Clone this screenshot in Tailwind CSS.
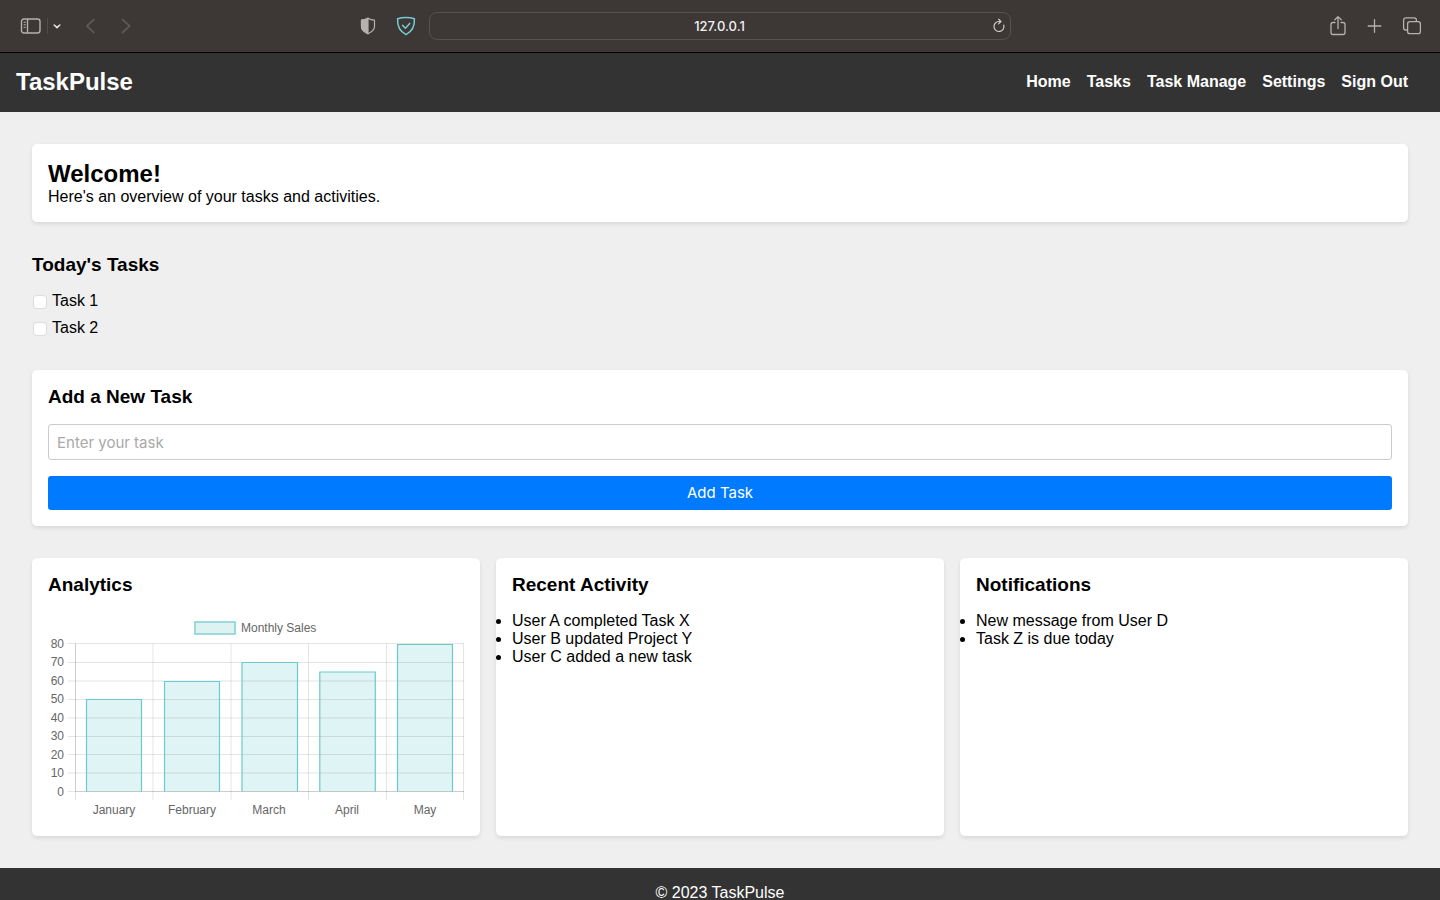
<!DOCTYPE html>
<html lang="en">
<head>
<meta charset="utf-8">
<meta name="viewport" content="width=device-width, initial-scale=1">
<title>TaskPulse</title>
<script src="https://cdn.jsdelivr.net/npm/@tailwindcss/browser@4"></script>
</head>
<body class="flex h-screen flex-col bg-[#efefef] font-['Liberation_Sans',Arial,sans-serif] text-base/[18px] text-black">

<!-- Browser toolbar -->
<div class="grid h-[53px] shrink-0 grid-cols-[1fr_minmax(0,584px)_1fr] items-center border-b border-black bg-[#3d3735] text-[#b5b1b0]">
  <div class="flex items-center justify-between pr-3 pb-px pl-5">
    <div class="flex items-center">
      <button type="button" aria-label="Sidebar" class="block">
        <svg class="block h-4 w-[22px]" viewBox="0 0 22 16" fill="none" stroke="currentColor" stroke-width="1.4"><rect x="1.5" y="1" width="18.5" height="14" rx="2.4"/><path d="M7.500 1v14"/><path d="M3.600 4.300h2.200M3.600 6.800h2.200M3.600 9.300h2.200" stroke-width="1.100"/></svg>
      </button>
      <span class="ml-[5px] h-4 border-l border-[#514b49]"></span>
      <button type="button" aria-label="Tab groups" class="ml-1 block text-[#e4e2e1]">
        <svg class="block h-4 w-3" viewBox="0 0 12 16" fill="none" stroke="currentColor" stroke-width="1.600" stroke-linecap="round" stroke-linejoin="round"><path d="M2.200 7 5 9.600l2.800-2.600"/></svg>
      </button>
      <button type="button" aria-label="Back" class="ml-[19px] block text-[#5d5755]">
        <svg class="block h-4 w-4" viewBox="0 0 16 16" fill="none" stroke="currentColor" stroke-width="1.800" stroke-linecap="round" stroke-linejoin="round"><path d="M11 1.500 3.800 8l7.200 6.500"/></svg>
      </button>
      <button type="button" aria-label="Forward" class="ml-5 block text-[#5d5755]">
        <svg class="block h-4 w-4" viewBox="0 0 16 16" fill="none" stroke="currentColor" stroke-width="1.800" stroke-linecap="round" stroke-linejoin="round"><path d="M3.500 1.500 10.700 8l-7.200 6.500"/></svg>
      </button>
    </div>
    <div class="flex items-center gap-5">
      <button type="button" aria-label="Privacy report" class="block">
        <svg class="block h-[18px] w-4" viewBox="0 0 16 18" fill="none" stroke="currentColor" stroke-width="1.200" stroke-linejoin="round"><path d="M8 1.200c2 1.400 4.200 1.900 6.500 2v6.300c0 3.600-3 5.600-6.500 7.300-3.500-1.700-6.500-3.700-6.500-7.300V3.200C3.800 3.100 6 2.600 8 1.200Z"/><path d="M8 1.200v15.600c-3.500-1.700-6.500-3.700-6.500-7.300V3.200C3.800 3.100 6 2.600 8 1.200Z" fill="currentColor"/></svg>
      </button>
      <button type="button" aria-label="Protection" class="block text-[#74cdd6]">
        <svg class="block h-5 w-5" viewBox="0 0 20 20" fill="none" stroke="currentColor" stroke-width="1.500" stroke-linecap="round" stroke-linejoin="round"><path d="M10 1.400c3 0 5.700.5 8.400 1.400.4 6.800-1.600 12.400-8.400 15.800C3.200 15.200 1.200 9.600 1.600 2.800 4.300 1.900 7 1.400 10 1.400Z"/><path d="m6.600 9.400 2.800 2.800 4.300-4.800"/></svg>
      </button>
    </div>
  </div>
  <div class="mx-px flex h-7 items-center rounded-lg border border-[#57514f] pr-[3px]">
    <input type="text" aria-label="Address" value="127.0.0.1" class="w-full min-w-0 flex-1 bg-transparent pl-[18px] text-center font-[Inter,sans-serif] text-[13px] font-medium text-[#f2f1f1] outline-none">
    <button type="button" aria-label="Reload" class="block">
      <svg class="block h-4 w-4" viewBox="0 0 16 16" fill="none" stroke="#d0cdcc" stroke-width="1.200" stroke-linecap="round" stroke-linejoin="round"><path d="M12.800 7.200a5 5 0 1 1-4.600-3.700h1.300"/><path d="M7.600 1.200 9.900 3.500 7.600 5.800"/></svg>
    </button>
  </div>
  <div class="flex items-center justify-end gap-[19px] pr-[18px] pb-px">
    <button type="button" aria-label="Share" class="block">
      <svg class="block h-[22px] w-5" viewBox="0 0 20 22" fill="none" stroke="currentColor" stroke-width="1.300" stroke-linecap="round" stroke-linejoin="round"><path d="M7 7.500H5a2 2 0 0 0-2 2v8a2 2 0 0 0 2 2h10a2 2 0 0 0 2-2v-8a2 2 0 0 0-2-2h-2"/><path d="M10 13.500V1.800M6.800 4.800 10 1.600l3.200 3.200"/></svg>
    </button>
    <button type="button" aria-label="New tab" class="block">
      <svg class="block h-4 w-4" viewBox="0 0 16 16" fill="none" stroke="currentColor" stroke-width="1.300" stroke-linecap="round"><path d="M7.500 1.700v12.600M1.200 8h12.600"/></svg>
    </button>
    <button type="button" aria-label="Tab overview" class="block">
      <svg class="block h-5 w-5" viewBox="0 0 20 20" fill="none" stroke="currentColor" stroke-width="1.300" stroke-linejoin="round"><rect x="5.600" y="5.700" width="12.800" height="12" rx="2.200"/><path d="M5.500 14H3.800a2.200 2.200 0 0 1-2.200-2.200V4a2.200 2.200 0 0 1 2.200-2.200h8.400A2.200 2.200 0 0 1 14.400 4v1.600"/></svg>
    </button>
  </div>
</div>

<!-- Page -->
<div class="min-h-0 flex-1 overflow-y-auto [scrollbar-width:none]">
  <header class="flex items-center justify-between bg-[#333] pt-[15px] pr-8 pb-[17px] pl-4 text-white">
    <h1 class="text-2xl/[27px] font-bold">TaskPulse</h1>
    <nav>
      <ul class="flex gap-4 font-bold">
        <li><a href="#">Home</a></li>
        <li><a href="#">Tasks</a></li>
        <li><a href="#">Task Manage</a></li>
        <li><a href="#">Settings</a></li>
        <li><a href="#">Sign Out</a></li>
      </ul>
    </nav>
  </header>

  <main class="flex flex-col gap-8 p-8">
    <section class="rounded-[5px] bg-white p-4 shadow-[0_2px_4px_rgba(0,0,0,0.1)]">
      <h2 class="text-2xl/[28px] font-bold">Welcome!</h2>
      <p>Here's an overview of your tasks and activities.</p>
    </section>

    <section class="flex flex-col gap-4 pb-0.5">
      <h3 class="text-[19px]/[22px] font-bold">Today's Tasks</h3>
      <ul class="flex flex-col gap-2.5">
        <li class="flex items-start gap-1.5 pl-0.5">
          <input id="task1" type="checkbox" class="mt-1 size-3 appearance-none rounded-[3px] bg-white shadow-[0_0_1px_1px_rgba(0,0,0,0.08)] checked:bg-[#007bff]">
          <label for="task1" class="leading-[17px]">Task 1</label>
        </li>
        <li class="flex items-start gap-1.5 pl-0.5">
          <input id="task2" type="checkbox" class="mt-1 size-3 appearance-none rounded-[3px] bg-white shadow-[0_0_1px_1px_rgba(0,0,0,0.08)] checked:bg-[#007bff]">
          <label for="task2" class="leading-[17px]">Task 2</label>
        </li>
      </ul>
    </section>

    <section class="rounded-[5px] bg-white p-4 shadow-[0_2px_4px_rgba(0,0,0,0.1)]">
      <form class="flex flex-col gap-4">
        <h3 class="text-[19px]/[22px] font-bold">Add a New Task</h3>
        <input type="text" aria-label="New task" placeholder="Enter your task" class="h-9 w-full rounded-[3px] border border-[#ccc] px-2 font-[Inter,sans-serif] text-[15px] placeholder:text-[#a9a9a9]">
        <button type="button" class="h-[34px] rounded-[3px] bg-[#007bff] font-[Inter,sans-serif] text-[15px] text-white">Add Task</button>
      </form>
    </section>

    <div class="grid grid-cols-3 gap-4">
      <section class="flex flex-col gap-4 rounded-[5px] bg-white p-4 shadow-[0_2px_4px_rgba(0,0,0,0.1)]">
        <h3 class="text-[19px]/[22px] font-bold">Analytics</h3>
        <svg class="block w-full" viewBox="0 0 416 208" role="img" aria-label="Monthly Sales bar chart" font-size="12" fill="#666">
          <rect x="147" y="10" width="40" height="12" fill="#dff2f2" stroke="#7fd0d3" stroke-width="1.500"/>
          <text x="193" y="20">Monthly Sales</text>
          <g fill="rgba(75,192,192,0.18)">
            <path d="M38 179.500V87.500h56v92zM116 179.500V69.500h56v110zM194 179.500V50.500h55.500v129zM271.500 179.500V60h56v119.500zM349.500 179.500V32h55.500v147.500z"/>
          </g>
          <g stroke="rgba(0,0,0,0.1)" fill="none">
            <path d="M19.500 31.500H416M19.500 50.500H416M19.500 69H416M19.500 87.500H416M19.500 106H416M19.500 124.500H416M19.500 142.500H416M19.500 161H416M19.500 179.500H416"/>
            <path d="M27.500 31.500V188M105 31.500V188M183 31.500V188M260.500 31.500V188M338.500 31.500V188M415.500 31.500V188"/>
            <path d="M27.500 31.500V179.500H416"/>
          </g>
          <path fill="none" stroke="#6ccace" stroke-width="1.200" d="M38.500 179.500V87.500h55v92M116.500 179.500V69.500h55v110M194 179.500V50.500h55.500v129M271.800 179.500V60h55.500v119.500M349.500 179.500V32.500h55v147"/>
          <g text-anchor="end">
            <text x="16" y="36">80</text><text x="16" y="54">70</text><text x="16" y="73">60</text>
            <text x="16" y="91">50</text><text x="16" y="110">40</text><text x="16" y="128">30</text>
            <text x="16" y="147">20</text><text x="16" y="165">10</text><text x="16" y="184">0</text>
          </g>
          <g text-anchor="middle">
            <text x="66" y="202">January</text><text x="144" y="202">February</text><text x="221" y="202">March</text>
            <text x="299" y="202">April</text><text x="377" y="202">May</text>
          </g>
        </svg>
      </section>

      <section class="flex flex-col gap-4 rounded-[5px] bg-white p-4 shadow-[0_2px_4px_rgba(0,0,0,0.1)]">
        <h3 class="text-[19px]/[22px] font-bold">Recent Activity</h3>
        <ul class="list-disc">
          <li>User A completed Task X</li>
          <li>User B updated Project Y</li>
          <li>User C added a new task</li>
        </ul>
      </section>

      <section class="flex flex-col gap-4 rounded-[5px] bg-white p-4 shadow-[0_2px_4px_rgba(0,0,0,0.1)]">
        <h3 class="text-[19px]/[22px] font-bold">Notifications</h3>
        <ul class="list-disc">
          <li>New message from User D</li>
          <li>Task Z is due today</li>
        </ul>
      </section>
    </div>
  </main>

  <footer class="bg-[#333] p-4 text-center text-white">
    <p>© 2023 TaskPulse</p>
  </footer>
</div>
</body>
</html>
